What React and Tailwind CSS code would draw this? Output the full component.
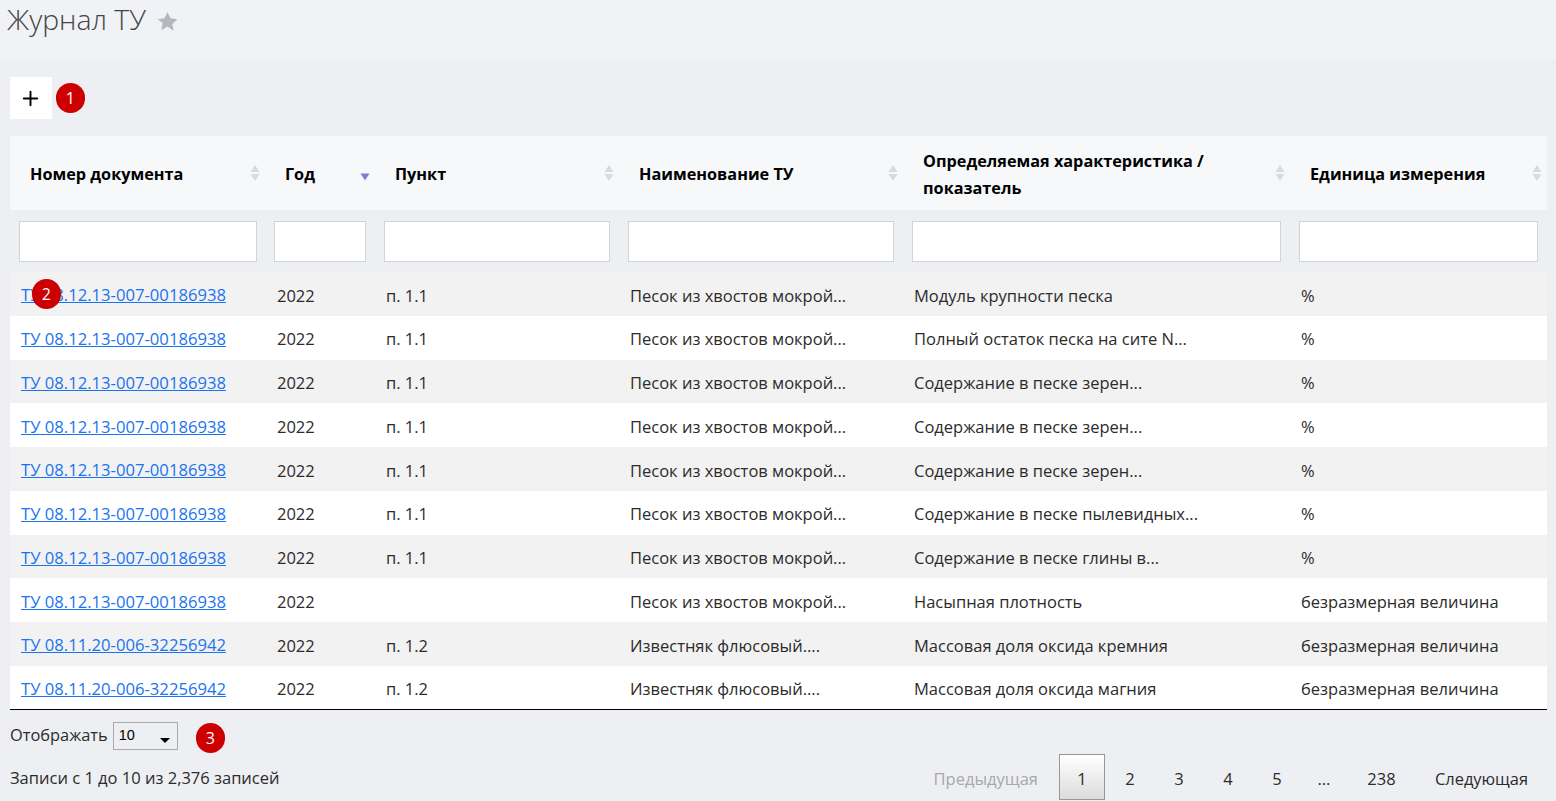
import React from 'react';
import { Plus } from 'lucide-react';

const LAND = 'Песок из хвостов мокрой...';
const LIME = 'Известняк флюсовый....';
const DOC_A = 'ТУ 08.12.13-007-00186938';
const DOC_B = 'ТУ 08.11.20-006-32256942';
const UNIT = 'безразмерная величина';

const rows = [
  [DOC_A, 'п. 1.1', LAND, 'Модуль крупности песка', '%'],
  [DOC_A, 'п. 1.1', LAND, 'Полный остаток песка на сите N...', '%'],
  [DOC_A, 'п. 1.1', LAND, 'Содержание в песке зерен...', '%'],
  [DOC_A, 'п. 1.1', LAND, 'Содержание в песке зерен...', '%'],
  [DOC_A, 'п. 1.1', LAND, 'Содержание в песке зерен...', '%'],
  [DOC_A, 'п. 1.1', LAND, 'Содержание в песке пылевидных...', '%'],
  [DOC_A, 'п. 1.1', LAND, 'Содержание в песке глины в...', '%'],
  [DOC_A, '', LAND, 'Насыпная плотность', UNIT],
  [DOC_B, 'п. 1.2', LIME, 'Массовая доля оксида кремния', UNIT],
  [DOC_B, 'п. 1.2', LIME, 'Массовая доля оксида магния', UNIT],
];

const columns = [
  { title: 'Номер документа', width: 'w-[255px]', filter: 'pl-[9px] pr-[8px]' },
  { title: 'Год', width: 'w-[110px]', sorted: true, filter: 'px-[9px]' },
  { title: 'Пункт', width: 'w-[244px]', filter: 'px-[9px]' },
  { title: 'Наименование ТУ', width: 'w-[284px]', filter: 'px-[9px]' },
  { title: 'Определяемая характеристика / показатель', width: 'w-[387px]', filter: 'px-[9px]' },
  { title: 'Единица измерения', width: 'w-[257px]', filter: 'px-[9px]' },
];

const Badge = ({ children, className }) => (
  <span className={`absolute flex h-[30px] w-[29.5px] items-center justify-center rounded-full bg-[#cc0000] text-[16px] text-white ${className}`}>
    {children}
  </span>
);

const SortIcon = ({ sorted }) => (
  <svg width="10" height="17" viewBox="0 0 10 17" className="absolute right-[5px] top-1/2 -translate-y-1/2">
    {sorted ? (
      <path d="M0.5 10h9l-4.5 7z" fill="#7b7fd6" transform="translate(0 -1)" />
    ) : (
      <>
        <path d="M0.5 7.5h9L5 0.5z" fill="#d9dadd" />
        <path d="M0.5 9.5h9L5 16.5z" fill="#d9dadd" />
      </>
    )}
  </svg>
);

const App = () => {
  return (
    <div className="relative h-[801px] w-[1556px] overflow-hidden bg-[#eeeff3] text-[#2b2b2b] [font-family:'Open_Sans',sans-serif]">
      <div className="flex h-[60px] items-start gap-[11px] bg-[#f0f2f5] pl-[7px]">
        <h1 className="text-[28.4px] font-light leading-[38px] text-[#444]">Журнал ТУ</h1>
        <svg width="21" height="21" viewBox="0 0 24 24" className="mt-[11px]" fill="#b4b7bc">
          <path d="M12 1l3.4 7.3 7.9 1-5.8 5.5 1.5 7.9L12 17.8l-7 3.9 1.5-7.9L.7 9.3l7.9-1z" />
        </svg>
      </div>

      <div className="pl-[10px] pr-[9px]">
        <div className="mt-[17px] flex h-[42px] w-[42px] items-center justify-center bg-white pr-[1px] text-black">
          <Plus size={23} strokeWidth={2} />
        </div>

        <table className="mt-[17px] w-[1537px] table-fixed border-collapse text-[16.5px]">
          <thead>
            <tr className="h-[74px] bg-[#f7f8fa]">
              {columns.map((col) => (
                <th
                  key={col.title}
                  className={`relative pl-[20px] pr-[20px] pt-[3px] text-left text-[16.25px] font-bold leading-[27px] text-black ${col.width}`}
                >
                  {col.title}
                  <SortIcon sorted={col.sorted} />
                </th>
              ))}
            </tr>
            <tr className="h-[62px]">
              {columns.map((col) => (
                <th key={col.title} className={col.filter}>
                  <input className="block h-[41px] w-full border border-[#d0d3d9] bg-white" />
                </th>
              ))}
            </tr>
          </thead>
          <tbody className="border-b border-black">
            {rows.map((row, i) => (
              <tr key={i} className={`h-[43.75px] ${i % 2 === 0 ? 'bg-[#f2f2f2]' : 'bg-white'}`}>
                <td className="px-[11px] pt-[4px]">
                  <a href="#" className="text-[16.65px] text-[#1a73f0] underline">{row[0]}</a>
                </td>
                <td className="pl-[12px] pr-[10px] pt-[4px]">2022</td>
                <td className="px-[11px] pt-[4px]">{row[1]}</td>
                <td className="px-[11px] pt-[4px]">{row[2]}</td>
                <td className="px-[11px] pt-[4px]">{row[3]}</td>
                <td className="px-[11px] pt-[4px]">{row[4]}</td>
              </tr>
            ))}
          </tbody>
        </table>

        <div className="mt-[12px] flex h-[28px] items-center text-[16.4px]">
          <span className="mb-[2px]">Отображать</span>
          <div className="relative ml-[5px] flex h-[28px] w-[65px] items-center border border-[#a9a9a9] pl-[5px] text-[14.5px] text-black [font-family:'Liberation_Sans',sans-serif]">
            10
            <span className="absolute bottom-[6px] right-[7px] h-0 w-0 border-x-[5px] border-t-[5px] border-x-transparent border-t-black" />
          </div>
        </div>

        <div className="mt-[4px] flex items-center justify-between text-[16.5px]">
          <span className="pt-[2px]">Записи с 1 до 10 из 2,376 записей</span>
          <div className="flex items-center">
            <span className="mr-[21px] pt-[4px] text-[#a8a8a8]">Предыдущая</span>
            <span className="flex h-[46px] w-[46px] items-center justify-center border border-[#979797] bg-gradient-to-b from-white to-[#dcdcdc] pt-[4px]">1</span>
            {['2', '3', '4', '5'].map((p) => (
              <span key={p} className="w-[49px] pl-[1px] pt-[4px] text-center">{p}</span>
            ))}
            <span className="w-[46px] pt-[4px] text-center">…</span>
            <span className="w-[69px] pt-[4px] text-center">238</span>
            <span className="ml-[19px] mr-[19px] pt-[4px] text-[16.4px]">Следующая</span>
          </div>
        </div>
      </div>

      <Badge className="left-[55.5px] top-[83px]">1</Badge>
      <Badge className="left-[31.5px] top-[279px]">2</Badge>
      <Badge className="left-[195.5px] top-[722.5px]">3</Badge>
    </div>
  );
};

export default App;
